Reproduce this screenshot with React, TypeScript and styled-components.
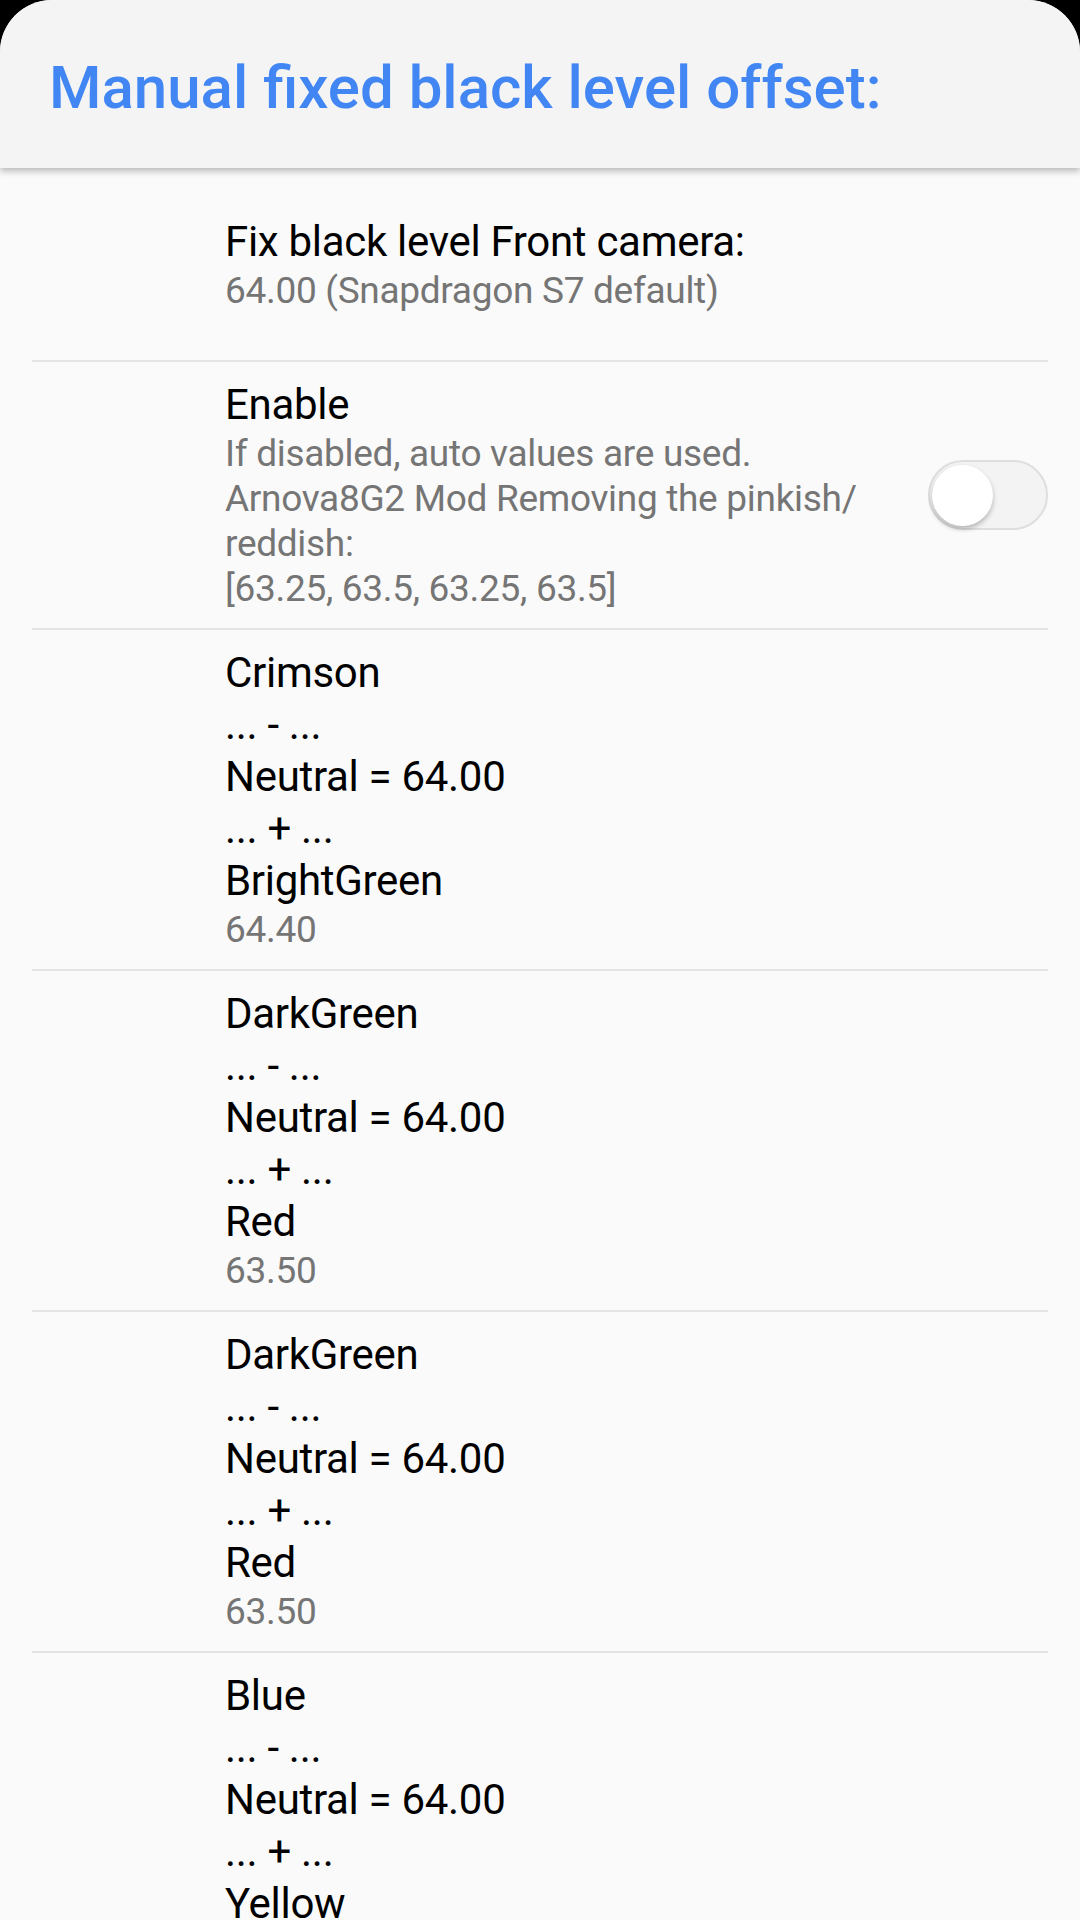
import React from 'react'
import styled, { createGlobalStyle } from "styled-components";

const GlobalStyle = createGlobalStyle`
body {
    margin: 0;
    background: #000;
}
`;

type Pref = {
    title: string;
    summary: string;
    toggle?: boolean;
}

const prefs: Pref[] = [
    { title: "Fix black level Front camera:", summary: "64.00 (Snapdragon S7 default)" },
    {
        title: "Enable",
        summary: "If disabled, auto values are used.\nArnova8G2 Mod Removing the pinkish/\nreddish:\n[63.25, 63.5, 63.25, 63.5]",
        toggle: true,
    },
    { title: "Crimson\n... - ...\nNeutral = 64.00\n... + ...\nBrightGreen", summary: "64.40" },
    { title: "DarkGreen\n... - ...\nNeutral = 64.00\n... + ...\nRed", summary: "63.50" },
    { title: "DarkGreen\n... - ...\nNeutral = 64.00\n... + ...\nRed", summary: "63.50" },
    { title: "Blue\n... - ...\nNeutral = 64.00\n... + ...\nYellow", summary: "64.00" },
];

const App = () => {
  return (
    <>
      <GlobalStyle />
      <Screen>
        <Header>
            <Title>Manual fixed black level offset:</Title>
        </Header>

        <List>
            {prefs.map((p, i) => (
                <Row key={i} first={i === 0}>
                    <Texts>
                        <PrefTitle>{p.title}</PrefTitle>
                        <Summary>{p.summary}</Summary>
                    </Texts>
                    {p.toggle ? (
                        <Track>
                            <Thumb />
                        </Track>
                    ) : null}
                </Row>
            ))}
        </List>
      </Screen>
    </>
  )
}

export default App;

const Screen = styled.div`
width: 1080px;
height: 1920px;
background-color: #fafafa;
border-radius: 52px 52px 0 0;
overflow: hidden;
font-family: Roboto, "Noto Sans", sans-serif;
`;

const Header = styled.header`
height: 168px;
box-sizing: border-box;
padding: 58px 0 0 49px;
background-color: #f4f4f4;
box-shadow: 0 3px 7px rgba(0, 0, 0, 0.28);
position: relative;
z-index: 1;
`;

const Title = styled.h1`
margin: 0;
font-family: Roboto, sans-serif;
font-weight: 500;
font-size: 60px;
line-height: 60px;
color: #4286f4;
`;

const List = styled.div`
margin: 0 32px;
`;

const Row = styled.div<{ first?: boolean }>`
display: flex;
align-items: center;
box-sizing: border-box;
min-height: ${p => (p.first ? "192px" : "0")};
padding: 17px 0 17px 193px;
border-top: ${p => (p.first ? "none" : "2px solid #e4e4e4")};
`;

const Texts = styled.div`
flex: 1;
`;

const PrefTitle = styled.div`
font-size: 42px;
line-height: 52px;
letter-spacing: -0.3px;
color: #000;
white-space: pre-line;
`;

const Summary = styled.div`
font-size: 37px;
line-height: 45px;
letter-spacing: -0.3px;
color: #757575;
white-space: pre-line;
`;

const Track = styled.div`
width: 120px;
height: 70px;
box-sizing: border-box;
flex-shrink: 0;
border-radius: 35px;
background-color: #f3f3f3;
border: 2px solid #dedede;
padding: 2px;
display: flex;
align-items: center;
`;

const Thumb = styled.div`
width: 61px;
height: 61px;
border-radius: 50%;
background-color: #fff;
box-shadow: 0 3px 5px rgba(0, 0, 0, 0.25);
`;
